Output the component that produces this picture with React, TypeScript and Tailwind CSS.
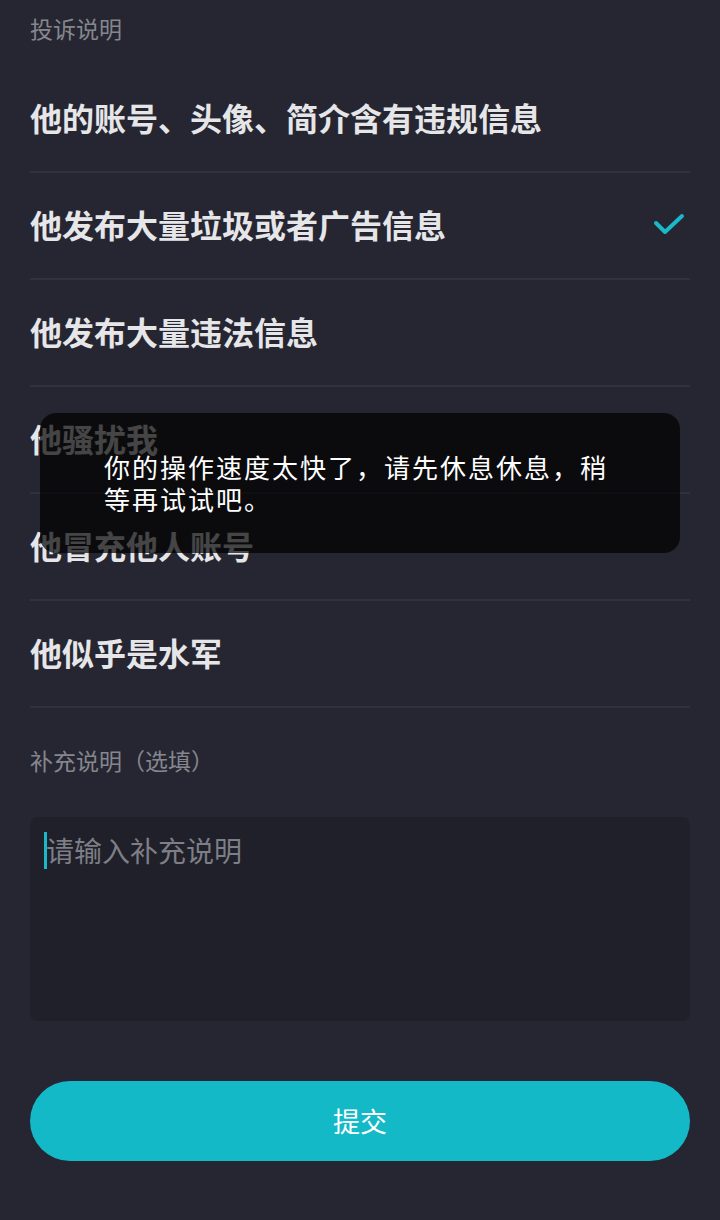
import React from "react";

const reasons = [
  "他的账号、头像、简介含有违规信息",
  "他发布大量垃圾或者广告信息",
  "他发布大量违法信息",
  "他骚扰我",
  "他冒充他人账号",
  "他似乎是水军",
];

const Check = () => (
  <svg width="34" height="30" viewBox="0 0 34 30" fill="none">
    <path
      d="M4 13 L13 22 L30 6"
      stroke="#1ab8c8"
      strokeWidth="4"
      strokeLinecap="round"
      strokeLinejoin="round"
    />
  </svg>
);

const App = () => {
  const selected = 1;

  return (
    <div
      className="relative w-[720px] h-[1220px] overflow-hidden bg-[#252631]"
      style={{ fontFamily: '"Noto Sans CJK SC", "Noto Sans", sans-serif' }}
    >
      <div className="px-[30px]">
        <div className="h-[66px] pt-[14px] text-[23px] leading-[28px] text-[#85868e]">
          投诉说明
        </div>

        {reasons.map((r, i) => (
          <div
            key={i}
            className="h-[107px] pb-[4px] flex items-center justify-between border-b-2 border-[#30323c]"
          >
            <span className="text-[32px] leading-[40px] font-bold text-[#e6e6e9]">
              {r}
            </span>
            {i === selected && (
              <span className="mr-[4px] mt-[2px]">
                <Check />
              </span>
            )}
          </div>
        ))}

        <div className="mt-[38px] text-[23px] leading-[28px] text-[#85868e]">
          补充说明（选填）
        </div>

        <div className="mt-[43px] h-[204px] rounded-[8px] bg-[#1f2029] pl-[14px] pt-[15px]">
          <div className="flex items-center h-[37px]">
            <span className="w-[3px] h-[37px] bg-[#1ab8c8]" />
            <span className="text-[28px] leading-[37px] text-[#7d7e86] -ml-[1px]">
              请输入补充说明
            </span>
          </div>
        </div>

        <button className="mt-[60px] w-full h-[80px] rounded-full bg-[#13b9c7] text-[27px] text-white">
          提交
        </button>
      </div>

      {/* toast */}
      <div className="absolute left-[40px] top-[413px] w-[640px] h-[140px] rounded-[16px] bg-black/70 flex items-center px-[64px]">
        <p className="text-[26px] leading-[32px] tracking-[2px] text-white">
          你的操作速度太快了，请先休息休息，稍等再试试吧。
        </p>
      </div>
    </div>
  );
};

export default App;
